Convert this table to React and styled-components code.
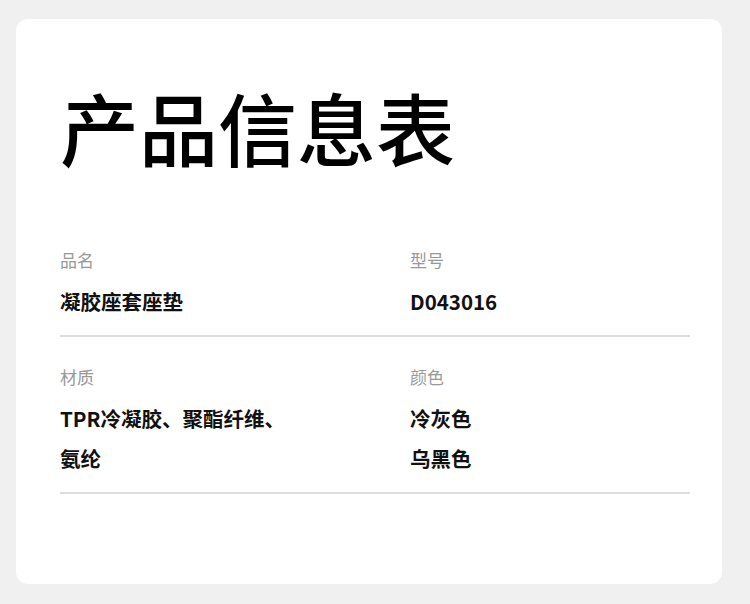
import React from "react";
import styled, { createGlobalStyle } from "styled-components";

const GlobalStyle = createGlobalStyle`
  html, body {
    margin: 0;
    padding: 0;
    background: #f0f0f0;
    font-family: "Noto Sans CJK SC", "Noto Sans", sans-serif;
  }
`;

const rows = [
  [
    { label: "品名", lines: ["凝胶座套座垫"] },
    { label: "型号", lines: ["D043016"] },
  ],
  [
    { label: "材质", lines: ["TPR冷凝胶、聚酯纤维、", "氨纶"] },
    { label: "颜色", lines: ["冷灰色", "乌黑色"] },
  ],
];

function App() {
  return (
    <Page>
      <GlobalStyle />
      <Card>
        <Title>产品信息表</Title>
        {rows.map((row, i) => (
          <Row key={i}>
            {row.map((cell) => (
              <Cell key={cell.label}>
                <Label>{cell.label}</Label>
                {cell.lines.map((line) => (
                  <Value key={line}>{line}</Value>
                ))}
              </Cell>
            ))}
          </Row>
        ))}
      </Card>
    </Page>
  );
}

const Page = styled.div`
  width: 750px;
  height: 604px;
  padding: 19px 28px 20px 16px;
  box-sizing: border-box;
`;

const Card = styled.div`
  height: 100%;
  background: #fff;
  border-radius: 12px;
  padding: 68px 32px 0 44px;
  box-sizing: border-box;
`;

const Title = styled.h1`
  margin: 0 0 83px;
  font-size: 79px;
  line-height: 80px;
  font-weight: 500;
  color: #000;
`;

const Row = styled.div`
  display: grid;
  grid-template-columns: 350px 1fr;
  padding: 0 0 14px;
  border-bottom: 2px solid #dddddd;

  & + & {
    padding-top: 30px;
  }
`;

const Cell = styled.div`
  display: flex;
  flex-direction: column;
`;

const Label = styled.div`
  font-size: 17px;
  line-height: 20px;
  color: #999;
  margin-bottom: 11px;
`;

const Value = styled.div`
  font-size: 20.5px;
  line-height: 40px;
  font-weight: 700;
  color: #111;
`;

export default App;
